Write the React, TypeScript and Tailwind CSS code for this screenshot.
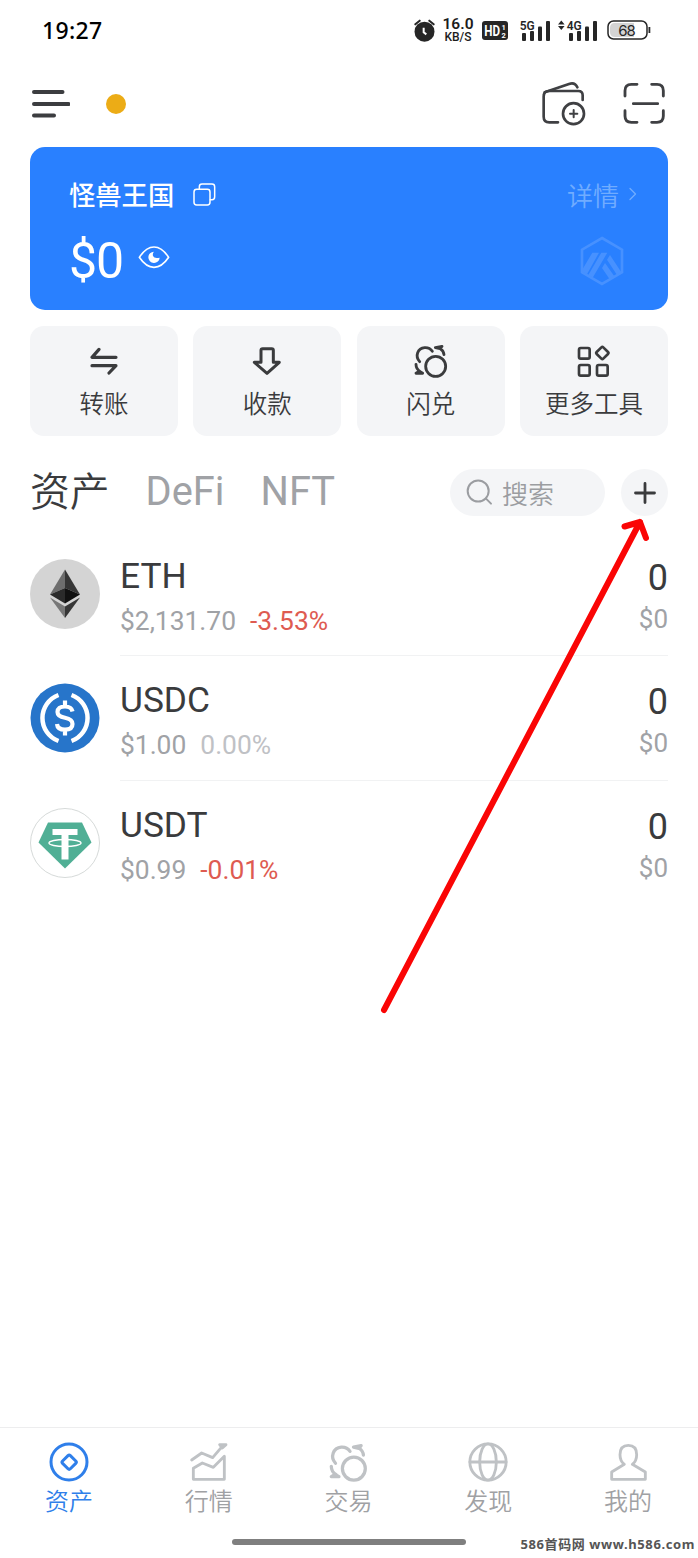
import type { ReactNode } from 'react';

interface IconProps {
  className?: string;
}

interface Token {
  symbol: string;
  price: string;
  change: string;
  changeClass: string;
  balance: string;
  value: string;
  icon: ReactNode;
}

const line = {
  fill: 'none',
  stroke: 'currentColor',
  strokeLinecap: 'round',
  strokeLinejoin: 'round',
} as const;

// ---- Status bar ----

function AlarmIcon() {
  return (
    <svg className="w-[21px] h-[23px]" viewBox="43 56 63 69">
      <circle cx="74.500" cy="94" r="30" fill="#262626" />
      <path d="M47 72L60 61M102 72L89 61" stroke="#262626" strokeWidth="6" strokeLinecap="round" />
      <path d="M72 82V96L80 102" fill="none" stroke="#fff" strokeWidth="6" />
    </svg>
  );
}

function HdIcon() {
  return (
    <svg className="w-[26px] h-[19px] overflow-visible" viewBox="0 0 26 19" fontFamily="Roboto, sans-serif" fontWeight="700" fill="#fff">
      <rect width="26" height="19" rx="3" fill="#262626" />
      <text x="2.300" y="14.500" fontSize="14" textLength="15.800" lengthAdjust="spacingAndGlyphs">HD</text>
      <text x="19.500" y="8.500" fontSize="7.500">1</text>
      <text x="19.500" y="17" fontSize="7.500">2</text>
    </svg>
  );
}

function SignalIcon({ label, arrows }: { label: string; arrows?: boolean }) {
  return (
    <svg
      className={arrows ? 'w-[39px] h-[21px] overflow-visible' : 'w-[30px] h-[21px] overflow-visible'}
      viewBox={arrows ? '-9 0 39 21' : '0 0 30 21'}
      fill="#262626"
    >
      {arrows && <path d="M-9 4.500L-5.700 0.500L-2.400 4.500ZM-9 6L-5.700 10L-2.400 6Z" />}
      <rect x="2" y="13" width="4" height="8" rx="1" />
      <rect x="10" y="11" width="4" height="10" rx="1" />
      <rect x="18" y="6.500" width="4" height="14.500" rx="1" />
      <rect x="26" y="1" width="4" height="20" rx="1" />
      <text x="-0.300" y="9.800" fontSize="13" fontWeight="600" fontFamily="Roboto, sans-serif" textLength="15" lengthAdjust="spacingAndGlyphs">
        {label}
      </text>
    </svg>
  );
}

function BatteryIcon() {
  return (
    <svg className="w-[44px] h-[20px]" viewBox="0 0 44 20">
      <rect x="1" y="1" width="39" height="18" rx="5.500" fill="#fff" stroke="#262626" strokeWidth="1.500" />
      <path d="M8 3H27V17H8Q3 17 3 12V8Q3 3 8 3Z" fill="#d4d4d4" />
      <rect x="41.500" y="7" width="1.800" height="6" fill="#262626" />
      <text x="20" y="15.500" fontSize="15" textAnchor="middle" fontFamily="Inter, sans-serif" fill="#262626" textLength="17.500">68</text>
    </svg>
  );
}

// ---- Header ----

function MenuIcon() {
  return (
    <svg className="w-[38px] h-[28px] text-[#3c3d40]" viewBox="0 0 38 28" {...line} strokeWidth="4">
      <path d="M2 2H30.500M2 14H36.500M2 25.500H22" />
    </svg>
  );
}

function WalletAddIcon() {
  return (
    <svg className="w-[46px] h-[45px] text-[#3f4043]" viewBox="423 243 138 135" {...line} strokeWidth="8">
      <path d="M548 300V286Q548 273 535 273H447Q431 273 431 290V350Q431 367 448 367H474" />
      <path d="M434 277L507 252Q525 246 532 262" />
      <circle cx="520.500" cy="341" r="31.500" />
      <path d="M510 341H532M521 330V352" strokeWidth="6" />
    </svg>
  );
}

function ScanIcon() {
  return (
    <svg className="w-[43px] h-[43px] text-[#3f4043]" viewBox="669 247 129 129" {...line} strokeWidth="8.500">
      <path d="M675 289V273Q675 254 694 254H711M755 254H771Q790 254 790 273V289M675 333V349Q675 368 694 368H711M755 368H771Q790 368 790 349V333M700 312H773" />
    </svg>
  );
}

// ---- Account card ----

function CopyIcon() {
  return (
    <svg className="w-[23px] h-[23px]" viewBox="489 110 69 69" {...line} strokeWidth="4.500">
      <rect x="492" y="129" width="48" height="47" rx="8" />
      <path d="M508 128V121Q508 113 516 113H546Q554 113 554 121V151Q554 160 546 160H541" />
    </svg>
  );
}

function EyeIcon() {
  return (
    <svg className="w-[32px] h-[24px]" viewBox="323 300 96 72" {...line} strokeWidth="5">
      <path d="M327 337Q347 306 371 306Q395 306 415 337Q395 367 371 367Q347 367 327 337Z" />
      <path d="M371 320A17 17 0 1 0 388 338Q372 342 368 333Q366 325 371 320Z" fill="currentColor" stroke="none" />
    </svg>
  );
}

function ArbitrumMark() {
  return (
    <svg className="w-[44px] h-[50px] text-[#4791ff]" viewBox="239 271 132 150">
      <path d="M305 277L365 312V380L305 415L245 380V312Z" fill="none" stroke="currentColor" strokeWidth="8" />
      <path
        d="M276 321H296L260 386L247 379V370ZM303 321H321L277 396L264 388ZM329 328L363 380L350 388L320 342ZM314 352L342 392L328 401L305 367Z"
        fill="currentColor"
      />
    </svg>
  );
}

// ---- Quick actions ----

function TransferIcon() {
  return (
    <svg className="w-[28px] h-[28px]" viewBox="179 80 84 84" {...line} strokeWidth="9.500">
      <path d="M206 87L185 111H257M185 136H257L236 158" />
    </svg>
  );
}

function ReceiveIcon() {
  return (
    <svg className="w-[30px] h-[30px]" viewBox="666 76 90 90" {...line} strokeWidth="9">
      <path d="M698 84H725Q730 84 730 89V125H748L711 158L673 125H693V89Q693 84 698 84Z" />
    </svg>
  );
}

function SwapIcon({ className }: IconProps) {
  return (
    <svg className={className} viewBox="190 71 102 102" {...line} strokeWidth="8.500">
      <circle cx="255" cy="138" r="30" />
      <path d="M207 124C192 107 201 84 222 82Q237 81 245 93" />
      <path d="M254 82L274 78L268 85ZM269 85Q279 91 280 103" />
      <path d="M196 132Q196 147 209 154M196 159H216L206 153Z" />
    </svg>
  );
}

function ToolsIcon() {
  return (
    <svg className="w-[34px] h-[34px]" viewBox="680 70 102 102" {...line} strokeWidth="8">
      <rect x="686" y="82" width="32" height="32" rx="5" />
      <rect x="686" y="133" width="32" height="32" rx="5" />
      <rect x="740" y="133" width="32" height="32" rx="5" />
      <rect x="742" y="83" width="28" height="28" rx="4" transform="rotate(45 756 97)" />
    </svg>
  );
}

// ---- Tokens ----

function EthIcon() {
  return (
    <svg className="w-[70px] h-[70px]" viewBox="0 0 70 70">
      <circle cx="35" cy="35" r="35" fill="#d4d4d4" />
      <path d="M35 10.500L20 35.500L35 29Z" fill="#6e6e6e" />
      <path d="M35 10.500L50 35.500L35 29Z" fill="#363636" />
      <path d="M20 35.500L35 29V44.500Z" fill="#2b2b2b" />
      <path d="M50 35.500L35 29V44.500Z" fill="#111" />
      <path d="M20 38.500L35 47.500V59Z" fill="#777" />
      <path d="M50 38.500L35 47.500V59Z" fill="#363636" />
    </svg>
  );
}

function UsdcIcon() {
  return (
    <svg className="w-[70px] h-[70px]" viewBox="0 0 70 70">
      <circle cx="35" cy="35" r="34.500" fill="#2775ca" />
      <path
        d="M28.500 12A24.500 24.500 0 0 0 28.500 58M41.500 12A24.500 24.500 0 0 1 41.500 58"
        fill="none"
        stroke="#fff"
        strokeWidth="4.500"
      />
      <path
        d="M42.500 28.500Q41.500 23.500 35 23.500Q27.500 23.500 27.500 29Q27.500 33.500 35 34.700Q42.500 36 42.500 41Q42.500 46.700 35 46.700Q27.500 46.700 27 41M35 17.500V23.500M35 46.700V52.500"
        fill="none"
        stroke="#fff"
        strokeWidth="4.200"
      />
    </svg>
  );
}

function UsdtIcon() {
  return (
    <svg className="w-[70px] h-[70px]" viewBox="0 0 70 70">
      <circle cx="35" cy="35" r="34.500" fill="#fff" stroke="#d6dad9" />
      <path d="M18 14.500H52L61.500 34.500L35 60.500L8.500 34.500Z" fill="#50af95" />
      <path d="M22.500 21H47.500V27H38.500V51.500H31.500V27H22.500Z" fill="#fff" />
      <ellipse cx="35" cy="35" rx="16" ry="3.500" fill="none" stroke="#fff" strokeWidth="1.400" />
    </svg>
  );
}

// ---- Bottom navigation ----

function AssetsIcon() {
  return (
    <svg className="w-[40px] h-[40px]" viewBox="147 65 120 120" {...line} strokeWidth="9">
      <circle cx="207" cy="125" r="54" />
      <rect x="191" y="109" width="33" height="33" rx="5" transform="rotate(45 207.500 125.500)" />
    </svg>
  );
}

function MarketIcon() {
  return (
    <svg className="w-[40px] h-[40px]" viewBox="568 65 120 120" {...line} strokeWidth="8.500">
      <path d="M576 119L606 98L639 112L667 79M660 73H679L668 83Z" />
      <path d="M581 144L608 128L641 141L674 108V177H581Z" />
    </svg>
  );
}

function GlobeIcon() {
  return (
    <svg className="w-[40px] h-[40px]" viewBox="357 65 120 120" {...line} strokeWidth="8.500">
      <circle cx="417" cy="125" r="54.500" />
      <ellipse cx="417" cy="125" rx="25" ry="54.500" />
      <path d="M363 125H471" />
    </svg>
  );
}

function ProfileIcon() {
  return (
    <svg className="w-[40px] h-[40px]" viewBox="775 65 120 120" {...line} strokeWidth="8.500">
      <path d="M824 132Q811 122 811 103Q811 75 836 75Q861 75 861 103Q861 122 848 132L887 155V177H786V155Z" />
    </svg>
  );
}

const actions = [
  { label: '转账', icon: <TransferIcon /> },
  { label: '收款', icon: <ReceiveIcon /> },
  { label: '闪兑', icon: <SwapIcon className="w-[34px] h-[34px]" /> },
  { label: '更多工具', icon: <ToolsIcon /> },
];

const tokens: Token[] = [
  { symbol: 'ETH', price: '$2,131.70', change: '-3.53%', changeClass: 'text-[#de5b51]', balance: '0', value: '$0', icon: <EthIcon /> },
  { symbol: 'USDC', price: '$1.00', change: '0.00%', changeClass: 'text-[#bfc1c5]', balance: '0', value: '$0', icon: <UsdcIcon /> },
  { symbol: 'USDT', price: '$0.99', change: '-0.01%', changeClass: 'text-[#de5b51]', balance: '0', value: '$0', icon: <UsdtIcon /> },
];

const navItems = [
  { label: '资产', icon: <AssetsIcon />, active: true },
  { label: '行情', icon: <MarketIcon /> },
  { label: '交易', icon: <SwapIcon className="w-[39px] h-[39px] my-[0.500px]" /> },
  { label: '发现', icon: <GlobeIcon /> },
  { label: '我的', icon: <ProfileIcon /> },
];

function StatusBar() {
  return (
    <div className="flex h-[60px] items-center justify-between pl-[42px] pr-[47px]">
      <span className="font-['Noto_Sans'] text-[23px] font-medium tracking-[0.3px] text-black">19:27</span>
      <div className="flex items-center">
        <AlarmIcon />
        <div className="ml-[8px] mr-[9px] flex w-[30px] flex-col items-center whitespace-nowrap text-[#1c1c1c]">
          <span className="text-[15.500px] font-semibold leading-[12px]">16.0</span>
          <span className="mt-[1px] text-[12px] font-medium leading-[12px]">KB/S</span>
        </div>
        <HdIcon />
        <div className="ml-[12px] mr-[8px]"><SignalIcon label="5G" /></div>
        <SignalIcon label="4G" arrows />
        <div className="ml-[10px]"><BatteryIcon /></div>
      </div>
    </div>
  );
}

function AccountCard() {
  return (
    <section className="mx-[30px] flex h-[163px] justify-between rounded-[15px] bg-[#2980ff] pl-[39px] pr-[30px] text-white">
      <div>
        <div className="mt-[28px] flex h-[38px] items-center">
          <span className="pt-[6px] text-[26.300px] font-medium">怪兽王国</span>
          <span className="ml-[19px]"><CopyIcon /></span>
        </div>
        <div className="mt-[17px] flex h-[60px] items-center">
          <span className="pt-[2px] text-[50px] leading-none tracking-[-1.200px]">$0</span>
          <span className="ml-[15px] -mt-[6px]"><EyeIcon /></span>
        </div>
      </div>
      <div className="flex flex-col items-end">
        <div className="mt-[28px] flex h-[38px] items-center text-[#70acff]">
          <span className="pt-[6px] text-[26px] font-[350]">详情</span>
          <svg className="ml-[9px] w-[10px] h-[16px]" viewBox="0 0 10 16" {...line} strokeWidth="1.300">
            <path d="M2 2.500L7.500 8L2 13.500" />
          </svg>
        </div>
        <div className="mr-[14px] mt-[23px]"><ArbitrumMark /></div>
      </div>
    </section>
  );
}

function TokenRow({ token, last }: { token: Token; last: boolean }) {
  return (
    <li className="flex h-[124.400px]">
      <div className="mt-[27px] w-[90px] shrink-0">{token.icon}</div>
      <div className={`flex flex-1 justify-between border-b ${last ? 'border-transparent' : 'border-[#f1f2f3]'}`}>
        <div className="flex flex-col">
          <span className="mt-[24px] text-[35.300px] leading-[41px] text-[#3a3b3d]">{token.symbol}</span>
          <div className="mt-[9px] flex gap-[14px] text-[26.400px] leading-[31px]">
            <span className="text-[#a0a2a6]">{token.price}</span>
            <span className={token.changeClass}>{token.change}</span>
          </div>
        </div>
        <div className="flex flex-col items-end">
          <span className="mt-[26px] text-[36px] leading-[41px] text-[#3a3b3d]">{token.balance}</span>
          <span className="mt-[5px] text-[26px] leading-[31px] text-[#a0a2a6]">{token.value}</span>
        </div>
      </div>
    </li>
  );
}

export default function App() {
  return (
    <div className="relative flex h-[1558px] w-[698px] flex-col overflow-hidden bg-white font-['Roboto','Noto_Sans_CJK_SC',sans-serif]">
      <StatusBar />

      <header className="flex h-[87px] items-center pl-[32px] pr-[32px]">
        <MenuIcon />
        <span className="ml-[36px] size-[20px] rounded-full bg-[#ecac16]" />
        <div className="ml-auto flex items-center gap-[36px]">
          <WalletAddIcon />
          <ScanIcon />
        </div>
      </header>

      <AccountCard />

      <div className="mx-[30px] mt-[16px] grid grid-cols-4 gap-x-[15.500px]">
        {actions.map((action) => (
          <button key={action.label} className="flex h-[110px] flex-col items-center rounded-[14px] bg-[#f4f5f7] text-[#3a3b3d]">
            <span className="mt-[17px] flex h-[36px] items-center">{action.icon}</span>
            <span className="mt-[8px] text-[24.500px] font-[350] leading-[36px]">{action.label}</span>
          </button>
        ))}
      </div>

      {/* Asset tabs and search */}
      <div className="mx-[30px] mt-[33px] flex h-[47px] items-center">
        <div className="flex items-center pb-[2px] text-[39.800px] leading-none text-[#a0a2a6]">
          <span className="pt-[2px] font-[350] text-[#3a3b3d]">资产</span>
          <span className="ml-[36px]">DeFi</span>
          <span className="ml-[36px]">NFT</span>
        </div>
        <div className="ml-auto flex h-[47px] w-[155px] items-center rounded-full bg-[#f4f5f7] pl-[16px] text-[#9b9da1]">
          <svg className="w-[27px] h-[27px]" viewBox="138 84 81 81" {...line} strokeWidth="6">
            <circle cx="174.500" cy="120" r="31.500" />
            <path d="M198 143L213 158" />
          </svg>
          <span className="ml-[9px] pt-[6px] text-[26px] font-[350]">搜索</span>
        </div>
        <button className="ml-[16px] flex size-[47px] items-center justify-center rounded-full bg-[#f4f5f7] text-[#3a3b3d]">
          <svg className="w-[24px] h-[24px]" viewBox="0 0 24 24" {...line} strokeWidth="2.800">
            <path d="M2.500 12H21.500M12 2.500V21.500" />
          </svg>
        </button>
      </div>

      <ul className="mx-[30px] mt-[16px]">
        {tokens.map((token, i) => (
          <TokenRow key={token.symbol} token={token} last={i === tokens.length - 1} />
        ))}
      </ul>

      <footer className="mt-auto flex h-[131px] flex-col border-t border-[#ededee]">
        <nav className="-ml-[1px] grid grid-cols-5">
          {navItems.map((item) => (
            <button key={item.label} className={`flex flex-col items-center pt-[14px] ${item.active ? 'text-[#2f7fea]' : 'text-[#9fa1a4]'}`}>
              <span className={item.active ? '' : 'text-[#bfc2c5]'}>{item.icon}</span>
              <span className="mt-[2px] text-[24px] font-[350] leading-[36px]">{item.label}</span>
            </button>
          ))}
        </nav>
        <div className="mx-auto mt-[19px] h-[6px] w-[234px] rounded-full bg-[#7f7f7f]" />
      </footer>

      {/* Pointer to the add-token button */}
      <svg className="pointer-events-none absolute left-0 top-0 w-[698px] h-[1100px]" viewBox="0 0 698 1100" fill="none" stroke="#fa0505" strokeWidth="6" strokeLinecap="round" strokeLinejoin="round">
        <path d="M384 1010L640 522M624.500 526.500L640 522L646 538" />
      </svg>

      <span className="absolute bottom-[5px] right-[3px] whitespace-nowrap font-['Noto_Sans','Noto_Sans_CJK_SC',sans-serif] text-[13px] font-bold leading-[18px] tracking-[0.600px] text-[#555]">
        586首码网 www.h586.com
      </span>
    </div>
  );
}
